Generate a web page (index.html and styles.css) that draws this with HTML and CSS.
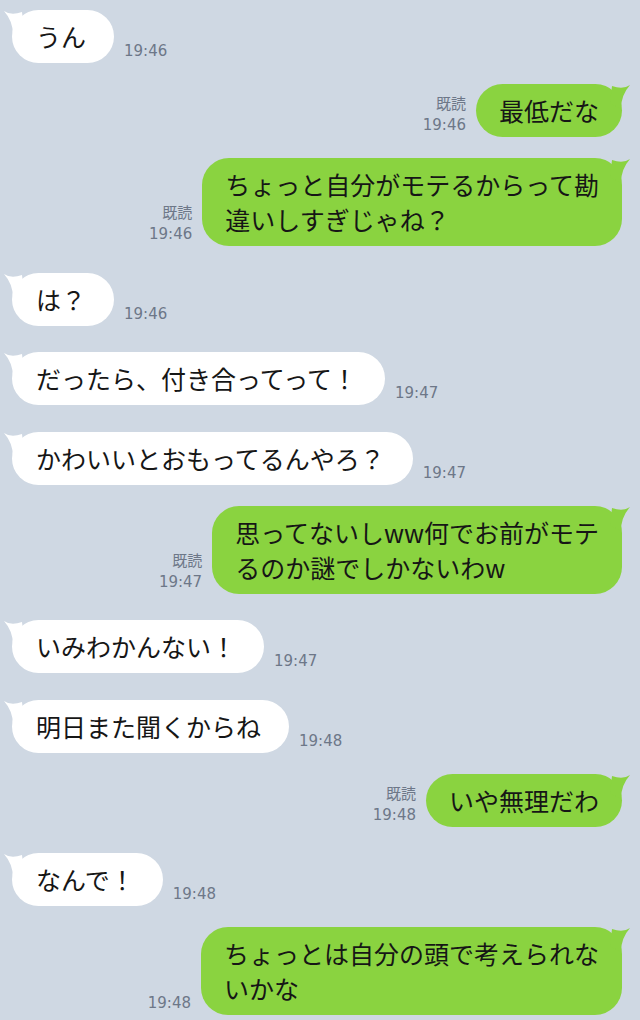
FILE: index.html
```html
<!DOCTYPE html>
<html lang="ja">
<head>
<meta charset="utf-8">
<title>トーク</title>
<link rel="stylesheet" href="styles.css">
</head>
<body>
<main class="chat">
  <div class="msg in first">
    <div class="bubble"><svg class="tail" viewBox="0 0 30 30"><path d="M2 2 Q9 7 20 3 L22 20 L11 26 Q11 12 2 2 Z"/></svg>うん</div>
    <div class="meta">19:46</div>
  </div>
  <div class="msg out">
    <div class="meta">既読<br>19:46</div>
    <div class="bubble"><svg class="tail" viewBox="0 0 30 30"><path d="M28 2 Q21 7 10 3 L8 20 L19 26 Q19 12 28 2 Z"/></svg>最低だな</div>
  </div>
  <div class="msg out">
    <div class="meta">既読<br>19:46</div>
    <div class="bubble"><svg class="tail" viewBox="0 0 30 30"><path d="M28 2 Q21 7 10 3 L8 20 L19 26 Q19 12 28 2 Z"/></svg>ちょっと自分がモテるからって勘<br>違いしすぎじゃね？</div>
  </div>
  <div class="msg in">
    <div class="bubble"><svg class="tail" viewBox="0 0 30 30"><path d="M2 2 Q9 7 20 3 L22 20 L11 26 Q11 12 2 2 Z"/></svg>は？</div>
    <div class="meta">19:46</div>
  </div>
  <div class="msg in">
    <div class="bubble"><svg class="tail" viewBox="0 0 30 30"><path d="M2 2 Q9 7 20 3 L22 20 L11 26 Q11 12 2 2 Z"/></svg>だったら、付き合ってって！</div>
    <div class="meta">19:47</div>
  </div>
  <div class="msg in">
    <div class="bubble"><svg class="tail" viewBox="0 0 30 30"><path d="M2 2 Q9 7 20 3 L22 20 L11 26 Q11 12 2 2 Z"/></svg>かわいいとおもってるんやろ？</div>
    <div class="meta">19:47</div>
  </div>
  <div class="msg out">
    <div class="meta">既読<br>19:47</div>
    <div class="bubble"><svg class="tail" viewBox="0 0 30 30"><path d="M28 2 Q21 7 10 3 L8 20 L19 26 Q19 12 28 2 Z"/></svg>思ってないしww何でお前がモテ<br>るのか謎でしかないわw</div>
  </div>
  <div class="msg in">
    <div class="bubble"><svg class="tail" viewBox="0 0 30 30"><path d="M2 2 Q9 7 20 3 L22 20 L11 26 Q11 12 2 2 Z"/></svg>いみわかんない！</div>
    <div class="meta">19:47</div>
  </div>
  <div class="msg in">
    <div class="bubble"><svg class="tail" viewBox="0 0 30 30"><path d="M2 2 Q9 7 20 3 L22 20 L11 26 Q11 12 2 2 Z"/></svg>明日また聞くからね</div>
    <div class="meta">19:48</div>
  </div>
  <div class="msg out">
    <div class="meta">既読<br>19:48</div>
    <div class="bubble"><svg class="tail" viewBox="0 0 30 30"><path d="M28 2 Q21 7 10 3 L8 20 L19 26 Q19 12 28 2 Z"/></svg>いや無理だわ</div>
  </div>
  <div class="msg in">
    <div class="bubble"><svg class="tail" viewBox="0 0 30 30"><path d="M2 2 Q9 7 20 3 L22 20 L11 26 Q11 12 2 2 Z"/></svg>なんで！</div>
    <div class="meta">19:48</div>
  </div>
  <div class="msg out">
    <div class="meta">19:48</div>
    <div class="bubble"><svg class="tail" viewBox="0 0 30 30"><path d="M28 2 Q21 7 10 3 L8 20 L19 26 Q19 12 28 2 Z"/></svg>ちょっとは自分の頭で考えられな<br>いかな</div>
  </div>
</main>
</body>
</html>
```

FILE: styles.css
```css
html, body {
  margin: 0;
  padding: 0;
  background: #cfd8e3;
  height: 1020px;
  overflow: hidden;
}

.chat {
  display: flex;
  flex-direction: column;
  padding: 10px 18px 0 12px;
  font-family: "Noto Sans CJK JP", "Noto Sans", sans-serif;
}

.msg {
  display: flex;
  align-items: flex-end;
}

.msg.in {
  justify-content: flex-start;
  gap: 10px;
  margin-top: 26.5px;
}

.msg.out {
  justify-content: flex-end;
  gap: 10px;
  margin-top: 21px;
}

.msg.first {
  margin-top: 0;
}

.bubble {
  position: relative;
  font-size: 25px;
  line-height: 35px;
  color: #161616;
  padding: 9px 23px;
  border-radius: 27px;
  white-space: nowrap;
}

.msg.in .bubble {
  background: #ffffff;
  padding: 9px 28px 9px 24px;
}

.msg.out .bubble {
  background: #8ad340;
}

.tail {
  position: absolute;
  top: -1px;
  width: 30px;
  height: 30px;
}

.msg.in .tail {
  left: -10px;
  fill: #ffffff;
}

.msg.out .tail {
  right: -10px;
  fill: #8ad340;
}

.meta {
  font-family: "DejaVu Sans", "Noto Sans CJK JP", sans-serif;
  font-size: 15px;
  line-height: 21px;
  color: #6d7788;
  margin-bottom: 1px;
}

.msg.out .meta {
  text-align: right;
}
```
